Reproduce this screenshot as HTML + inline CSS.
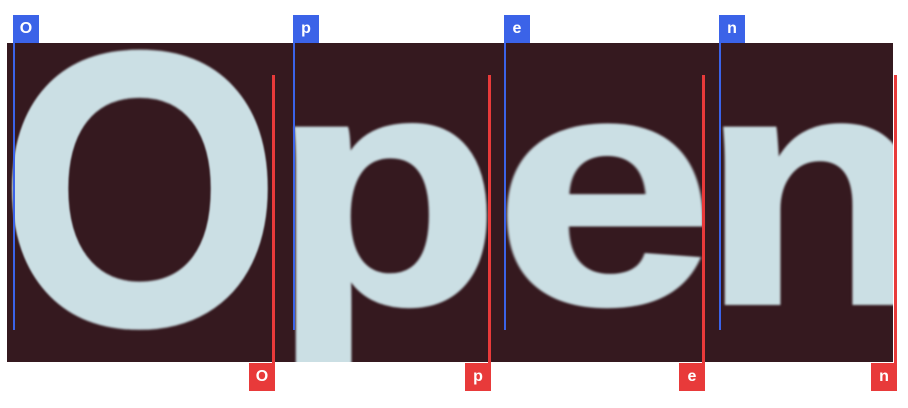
<!DOCTYPE html>
<html><head><style>
body{margin:0;width:908px;height:408px;background:#fff;position:relative;overflow:hidden;font-family:"Liberation Sans",sans-serif}
.photo{position:absolute;left:7px;top:43px;width:886px;height:319px;background:#35191f;overflow:hidden}
.L{position:absolute;font-weight:bold;font-size:330px;line-height:1;color:#cbdfe4;transform-origin:0 0;-webkit-text-stroke:4px #cbdfe4;filter:blur(1px)}
.lab{position:absolute;width:26px;height:28px;color:#fff;font-weight:bold;font-size:16px;text-align:center;line-height:28px}
.b{background:#3b63e8}.r{background:#e83a3a}
.vl{position:absolute;width:2px}
</style></head><body>
<div class="photo">
<span class="L" style="left:-8px;top:-49px;font-size:390px;transform:scaleX(0.93)">O</span>
<span class="L" style="left:265px;top:-19px;transform:scaleX(1.13)">p</span>
<span class="L" style="left:487px;top:-19px;transform:scaleX(1.2)">e</span>
<span class="L" style="left:694px;top:-19px;transform:scaleX(1.13)">n</span>
</div>
<div class="vl" style="left:13px;top:43px;height:287px;background:#3b63e8"></div>
<div class="vl" style="left:293px;top:43px;height:287px;background:#3b63e8"></div>
<div class="vl" style="left:504px;top:43px;height:287px;background:#3b63e8"></div>
<div class="vl" style="left:719px;top:43px;height:287px;background:#3b63e8"></div>
<div class="vl" style="left:272px;top:75px;height:288px;background:#e83a3a;width:3px"></div>
<div class="vl" style="left:488px;top:75px;height:288px;background:#e83a3a;width:3px"></div>
<div class="vl" style="left:702px;top:75px;height:288px;background:#e83a3a;width:3px"></div>
<div class="vl" style="left:894px;top:75px;height:288px;background:#e83a3a;width:3px"></div>
<div class="lab b" style="left:13px;top:15px">O</div>
<div class="lab b" style="left:293px;top:15px">p</div>
<div class="lab b" style="left:504px;top:15px">e</div>
<div class="lab b" style="left:719px;top:15px">n</div>
<div class="lab r" style="left:249px;top:363px">O</div>
<div class="lab r" style="left:465px;top:363px">p</div>
<div class="lab r" style="left:679px;top:363px">e</div>
<div class="lab r" style="left:871px;top:363px">n</div>
</body></html>
